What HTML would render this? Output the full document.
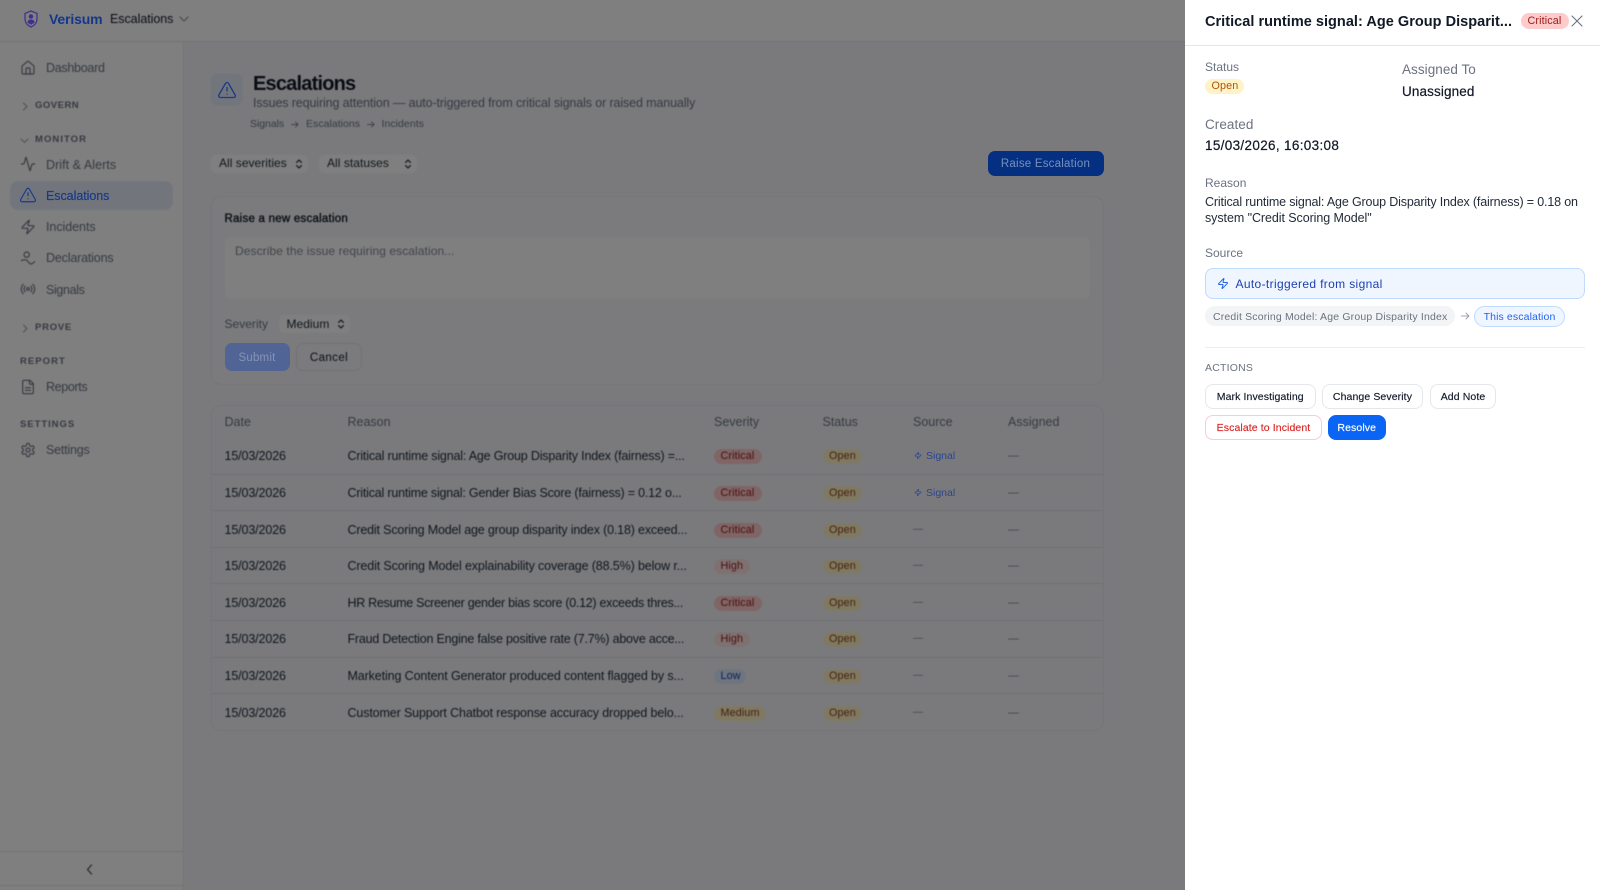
<!DOCTYPE html>
<html lang="en">
<head>
<meta charset="utf-8">
<title>Escalations</title>
<style>
*{box-sizing:border-box;margin:0;padding:0}
html,body{width:1600px;height:890px;overflow:hidden;background:#f4f5fa;font-family:"Liberation Sans",sans-serif}
.t{position:absolute;white-space:nowrap;line-height:16px;height:16px}
.b{position:absolute}
svg.i{position:absolute;fill:none;stroke:currentColor;stroke-width:2;stroke-linecap:round;stroke-linejoin:round}
#app{position:absolute;left:0;top:0;width:1600px;height:890px}
.nav{font-size:12.5px;color:#6b7280;left:46px;letter-spacing:-.05px}
.sec{font-size:9.5px;font-weight:bold;color:#6b7280}
.ni{color:#6b7280;width:16px;height:16px;left:20px;stroke-width:1.7!important}
.chev{color:#9ca3af;stroke-width:1.1!important}
.th{font-size:12.5px;color:#6b7280;top:414px}
.d{font-size:12.5px;color:#1f2937;left:224.5px;letter-spacing:-.12px;margin-top:.5px}
.r{font-size:12.5px;color:#1f2937;left:347.5px;margin-top:.5px}
.pill{position:absolute;height:15px;line-height:15px;border-radius:8px;font-size:10.8px;padding:0 6.5px;white-space:nowrap;letter-spacing:.12px;margin-top:.5px}
.cr{left:714px;width:47.5px;background:#fecaca;color:#991b1b}
.hi{left:714px;width:36px;background:#fee2e2;color:#991b1b}
.lo{left:714px;width:32px;background:#dbeafe;color:#1e40af}
.me{left:714px;width:51.5px;background:#fef3c7;color:#92400e}
.op{left:822.5px;width:39px;background:#fef3c7;color:#92400e}
.dash{font-size:10px;color:#7b8290;margin-top:.5px}
.sep{position:absolute;left:211px;width:892px;height:1px;background:#dde1e8}
.sig{font-size:10.5px;color:#2a4590;left:926px;margin-top:.5px}
.lab{color:#6b7280}
.sel{position:absolute;background:#fff;border-radius:5px}
.act{position:absolute;height:24.5px;border:1px solid #e5e7eb;border-radius:8px;background:#fff;font-size:10.5px;line-height:24.5px;text-align:center;color:#111827;letter-spacing:.1px;white-space:nowrap;-webkit-text-stroke:.15px currentColor}
</style>
</head>
<body>
<svg width="0" height="0" style="position:absolute">
<symbol id="zap" viewBox="0 0 24 24"><path d="M4 14a1 1 0 0 1-.78-1.63l9.9-10.2a.5.5 0 0 1 .86.46l-1.92 6.02A1 1 0 0 0 13 10h7a1 1 0 0 1 .78 1.63l-9.9 10.2a.5.5 0 0 1-.86-.46l1.92-6.02A1 1 0 0 0 11 14z"/></symbol>
<symbol id="warn" viewBox="0 0 24 24"><path d="m21.73 18-8-14a2 2 0 0 0-3.48 0l-8 14A2 2 0 0 0 4 21h16a2 2 0 0 0 1.73-3"/><path d="M12 9v4"/><path d="M12 17h.01"/></symbol>
<symbol id="ud" viewBox="0 0 10 14"><path d="M2 5 5 2l3 3M2 9l3 3 3-3"/></symbol>
</svg>

<div id="app">
  <!-- top bar -->
  <div class="b" style="left:0;top:0;width:1600px;height:42px;background:#fff;border-bottom:1px solid #e5e7eb"></div>
  <div class="t" style="left:110px;top:11px;font-size:12.5px;color:#111827;letter-spacing:-.05px">Escalations</div>
  <svg class="i chev" style="left:179px;top:14px;stroke-width:1.3!important" width="10" height="10" viewBox="0 0 10 10"><path d="M1 3l4 4 4-4"/></svg>

  <!-- sidebar -->
  <div class="b" style="left:0;top:42px;width:184px;height:848px;background:#fff;border-right:1px solid #e5e7eb"></div>
  <svg class="i ni" style="top:60px" viewBox="0 0 24 24"><path d="M15 21v-8a1 1 0 0 0-1-1h-4a1 1 0 0 0-1 1v8"/><path d="M3 10a2 2 0 0 1 .709-1.528l7-5.999a2 2 0 0 1 2.582 0l7 5.999A2 2 0 0 1 21 10v9a2 2 0 0 1-2 2H5a2 2 0 0 1-2-2z"/></svg>
  <div class="t nav" style="top:59.5px;letter-spacing:-.28px">Dashboard</div>
  <svg class="i chev" style="left:20.5px;top:102px" width="8" height="9" viewBox="0 0 8 9"><path d="M2.5 1l3.500 3.500L2.500 8"/></svg>
  <div class="t sec" style="left:35px;top:98px;letter-spacing:.5px">GOVERN</div>
  <svg class="i chev" style="left:20px;top:137px" width="9" height="8" viewBox="0 0 9 8"><path d="M1 2l3.500 3.500L8 2"/></svg>
  <div class="t sec" style="left:35px;top:132px;letter-spacing:1.05px">MONITOR</div>
  <svg class="i ni" style="top:156px" viewBox="0 0 24 24"><path d="M22 12h-2.480a2 2 0 0 0-1.930 1.460l-2.350 8.360a.25.25 0 0 1-.48 0L9.240 2.180a.25.25 0 0 0-.48 0l-2.350 8.360A2 2 0 0 1 4.490 12H2"/></svg>
  <div class="t nav" style="top:156.5px;letter-spacing:.05px">Drift &amp; Alerts</div>
  <div class="b" style="left:10px;top:181px;width:163px;height:29px;border-radius:8px;background:#e5edf9"></div>
  <svg class="i" style="left:20px;top:219px;color:#6b7280;width:16px;height:16px;stroke-width:1.7"><use href="#zap"/></svg>
  <div class="t nav" style="top:219px">Incidents</div>
  <svg class="i ni" style="top:250px" viewBox="0 0 24 24"><circle cx="10" cy="7" r="4"/><path d="M2 16c2-1.500 7-2 9 0s3 5 5.500 5 3.500-2 5.500-3.500"/></svg>
  <div class="t nav" style="top:250px;letter-spacing:-.17px">Declarations</div>
  <svg class="i ni" style="top:281px" viewBox="0 0 24 24"><path d="M4.900 19.100C1 15.200 1 8.800 4.900 4.900"/><path d="M7.800 16.200c-2.300-2.300-2.300-6.100 0-8.500"/><circle cx="12" cy="12" r="2"/><path d="M16.200 7.800c2.300 2.300 2.300 6.100 0 8.500"/><path d="M19.100 4.900C23 8.800 23 15.100 19.100 19"/></svg>
  <div class="t nav" style="top:281.5px;letter-spacing:-.35px">Signals</div>
  <svg class="i chev" style="left:20.5px;top:324px" width="8" height="9" viewBox="0 0 8 9"><path d="M2.500 1l3.500 3.500L2.500 8"/></svg>
  <div class="t sec" style="left:35px;top:320px;letter-spacing:.75px">PROVE</div>
  <div class="t sec" style="left:20px;top:354px;letter-spacing:1.05px">REPORT</div>
  <svg class="i ni" style="top:379px" viewBox="0 0 24 24"><path d="M15 2H6a2 2 0 0 0-2 2v16a2 2 0 0 0 2 2h12a2 2 0 0 0 2-2V7Z"/><path d="M14 2v4a2 2 0 0 0 2 2h4"/><path d="M16 13H8"/><path d="M16 17H8"/></svg>
  <div class="t nav" style="top:378.5px;letter-spacing:-.35px">Reports</div>
  <div class="t sec" style="left:20px;top:417px;letter-spacing:.95px">SETTINGS</div>
  <svg class="i ni" style="top:442px" viewBox="0 0 24 24"><path d="M12.220 2h-.44a2 2 0 0 0-2 2v.18a2 2 0 0 1-1 1.730l-.43.25a2 2 0 0 1-2 0l-.15-.08a2 2 0 0 0-2.730.73l-.22.38a2 2 0 0 0 .73 2.730l.15.1a2 2 0 0 1 1 1.720v.51a2 2 0 0 1-1 1.740l-.15.09a2 2 0 0 0-.73 2.730l.22.38a2 2 0 0 0 2.730.73l.15-.08a2 2 0 0 1 2 0l.43.25a2 2 0 0 1 1 1.730V20a2 2 0 0 0 2 2h.44a2 2 0 0 0 2-2v-.18a2 2 0 0 1 1-1.730l.43-.25a2 2 0 0 1 2 0l.15.08a2 2 0 0 0 2.730-.73l.22-.39a2 2 0 0 0-.73-2.730l-.15-.08a2 2 0 0 1-1-1.740v-.5a2 2 0 0 1 1-1.740l.15-.09a2 2 0 0 0 .73-2.730l-.22-.38a2 2 0 0 0-2.730-.73l-.15.08a2 2 0 0 1-2 0l-.43-.25a2 2 0 0 1-1-1.730V4a2 2 0 0 0-2-2z"/><circle cx="12" cy="12" r="3"/></svg>
  <div class="t nav" style="top:442px;letter-spacing:-.2px">Settings</div>
  <div class="b" style="left:0;top:851px;width:183px;height:1px;background:#e5e7eb"></div>
  <div class="b" style="left:0;top:885px;width:183px;height:1px;background:#e5e7eb"></div>
  <svg class="i" style="left:86px;top:864px;color:#4b5563;stroke-width:1.3" width="7" height="11" viewBox="0 0 7 11"><path d="M5.500 1 1.500 5.500l4 4.500"/></svg>

  <!-- header -->
  <div class="b" style="left:210px;top:73px;width:33px;height:33px;border-radius:8px;background:#e5edf9"></div>
  <div class="t" style="left:253px;top:75.5px;font-size:20px;font-weight:bold;color:#111827;letter-spacing:-.8px">Escalations</div>
  <div class="t" style="left:253px;top:95px;font-size:12.5px;color:#6b7280;letter-spacing:-.12px">Issues requiring attention — auto-triggered from critical signals or raised manually</div>
  <div class="t" style="left:250px;top:116px;font-size:10.5px;color:#6b7280;letter-spacing:-.05px">Signals</div>
  <svg class="i" style="left:290.500px;top:120.500px;color:#6b7280;stroke-width:1" width="8" height="7" viewBox="0 0 9 8"><path d="M.5 4h7.500M5 1l3 3-3 3"/></svg>
  <div class="t" style="left:306px;top:116px;font-size:10.5px;color:#6b7280;letter-spacing:.03px">Escalations</div>
  <svg class="i" style="left:366.500px;top:120.500px;color:#6b7280;stroke-width:1" width="8" height="7" viewBox="0 0 9 8"><path d="M.5 4h7.500M5 1l3 3-3 3"/></svg>
  <div class="t" style="left:381.500px;top:116px;font-size:10.5px;color:#6b7280;letter-spacing:.05px">Incidents</div>

  <!-- filters -->
  <div class="sel" style="left:211px;top:155px;width:97px;height:17.5px"></div>
  <div class="t" style="left:219px;top:155px;font-size:12px;color:#1f2937;letter-spacing:.03px">All severities</div>
  <svg class="i" style="left:295px;top:158px;width:8px;height:12px;color:#1f2937;stroke-width:1.500"><use href="#ud"/></svg>
  <div class="sel" style="left:319px;top:155px;width:98px;height:17.5px"></div>
  <div class="t" style="left:327px;top:155px;font-size:12px;color:#1f2937;letter-spacing:.05px">All statuses</div>
  <svg class="i" style="left:404px;top:158px;width:8px;height:12px;color:#1f2937;stroke-width:1.500"><use href="#ud"/></svg>

  <!-- card -->
  <div class="b" style="left:210.5px;top:196px;width:893px;height:189px;border:1px solid #e6e8ee;border-radius:10px;background:#f6f7fa"></div>
  <div class="t" style="left:224.5px;top:211px;font-size:11.5px;color:#111827;letter-spacing:.24px;-webkit-text-stroke:.35px #111827">Raise a new escalation</div>
  <div class="b" style="left:225px;top:237px;width:865px;height:62px;border-radius:7px;background:#fff"></div>
  <div class="t" style="left:235px;top:242.500px;font-size:12px;color:#6b7280;opacity:.85;letter-spacing:.08px">Describe the issue requiring escalation...</div>
  <div class="t" style="left:224.5px;top:316px;font-size:12px;color:#6b7280;letter-spacing:.02px">Severity</div>
  <div class="sel" style="left:279px;top:315px;width:71px;height:17.5px"></div>
  <div class="t" style="left:286.5px;top:315.5px;font-size:12px;color:#1f2937;letter-spacing:.03px">Medium</div>
  <svg class="i" style="left:337px;top:318px;width:8px;height:12px;color:#1f2937;stroke-width:1.500"><use href="#ud"/></svg>
  <div class="b" style="left:296px;top:343px;width:66px;height:28px;border-radius:7px;border:1px solid #dfe2e8"></div>
  <div class="t" style="left:296px;width:66px;text-align:center;top:350px;font-size:11.5px;color:#111827;letter-spacing:.4px">Cancel</div>

  <!-- table -->
  <div class="b" style="left:210.5px;top:405px;width:893px;height:326px;border:1px solid #e6e8ee;border-radius:10px"></div>
  <div class="t th" style="left:224.5px">Date</div>
  <div class="t th" style="left:347.5px">Reason</div>
  <div class="t th" style="left:714px">Severity</div>
  <div class="t th" style="left:822.5px">Status</div>
  <div class="t th" style="left:913px">Source</div>
  <div class="t th" style="left:1008px">Assigned</div>

  <div class="sep" style="top:474px"></div>
  <div class="sep" style="top:510px"></div>
  <div class="sep" style="top:547px"></div>
  <div class="sep" style="top:583px"></div>
  <div class="sep" style="top:620px"></div>
  <div class="sep" style="top:657px"></div>
  <div class="sep" style="top:693px"></div>

  <div class="t d" style="top:447.5px">15/03/2026</div>
  <div class="t r" style="top:447.5px;letter-spacing:-.18px">Critical runtime signal: Age Group Disparity Index (fairness) =...</div>
  <div class="pill cr" style="top:448.5px">Critical</div><div class="pill op" style="top:448.5px">Open</div>
  <div class="t dash" style="left:1008px;top:447.5px;font-size:11px">—</div>

  <div class="t d" style="top:484.5px">15/03/2026</div>
  <div class="t r" style="top:484.5px;letter-spacing:-.2px">Critical runtime signal: Gender Bias Score (fairness) = 0.12 o...</div>
  <div class="pill cr" style="top:485.5px">Critical</div><div class="pill op" style="top:485.5px">Open</div>
  <div class="t dash" style="left:1008px;top:484.5px;font-size:11px">—</div>

  <div class="t d" style="top:521px">15/03/2026</div>
  <div class="t r" style="top:521px;letter-spacing:-.165px">Credit Scoring Model age group disparity index (0.18) exceed...</div>
  <div class="pill cr" style="top:522px">Critical</div><div class="pill op" style="top:522px">Open</div>
  <div class="t dash" style="left:913px;top:521px">—</div><div class="t dash" style="left:1008px;top:521px;font-size:11px">—</div>

  <div class="t d" style="top:557.5px">15/03/2026</div>
  <div class="t r" style="top:557.5px;letter-spacing:-.13px">Credit Scoring Model explainability coverage (88.5%) below r...</div>
  <div class="pill hi" style="top:558.5px">High</div><div class="pill op" style="top:558.5px">Open</div>
  <div class="t dash" style="left:913px;top:557.5px">—</div><div class="t dash" style="left:1008px;top:557.5px;font-size:11px">—</div>

  <div class="t d" style="top:594px">15/03/2026</div>
  <div class="t r" style="top:594px;letter-spacing:-.29px">HR Resume Screener gender bias score (0.12) exceeds thres...</div>
  <div class="pill cr" style="top:595px">Critical</div><div class="pill op" style="top:595px">Open</div>
  <div class="t dash" style="left:913px;top:594px">—</div><div class="t dash" style="left:1008px;top:594px;font-size:11px">—</div>

  <div class="t d" style="top:630.5px">15/03/2026</div>
  <div class="t r" style="top:630.5px;letter-spacing:-.215px">Fraud Detection Engine false positive rate (7.7%) above acce...</div>
  <div class="pill hi" style="top:631.5px">High</div><div class="pill op" style="top:631.5px">Open</div>
  <div class="t dash" style="left:913px;top:630.5px">—</div><div class="t dash" style="left:1008px;top:630.5px;font-size:11px">—</div>

  <div class="t d" style="top:667px">15/03/2026</div>
  <div class="t r" style="top:667px;letter-spacing:-.12px">Marketing Content Generator produced content flagged by s...</div>
  <div class="pill lo" style="top:668px">Low</div><div class="pill op" style="top:668px">Open</div>
  <div class="t dash" style="left:913px;top:667px">—</div><div class="t dash" style="left:1008px;top:667px;font-size:11px">—</div>

  <div class="t d" style="top:704px">15/03/2026</div>
  <div class="t r" style="top:704px;letter-spacing:-.135px">Customer Support Chatbot response accuracy dropped belo...</div>
  <div class="pill me" style="top:705px">Medium</div><div class="pill op" style="top:705px">Open</div>
  <div class="t dash" style="left:913px;top:704px">—</div><div class="t dash" style="left:1008px;top:704px;font-size:11px">—</div>

  <!-- overlay -->
  <div class="b" style="left:0;top:0;width:1600px;height:890px;background:rgba(0,0,0,.5);backdrop-filter:blur(.5px)"></div>

  <!-- dimmed accent items, colours as seen through the overlay -->
  <div class="b" style="left:0;top:0;width:1184px;height:890px;filter:blur(.3px)">
    <svg class="b" style="left:24px;top:10px" width="14" height="18" viewBox="0 0 14 18"><path d="M7 1 13 3.400V9c0 3.800-2.600 6.500-6 8C3.600 15.500 1 12.800 1 9V3.400z" fill="none" stroke="#45338f" stroke-width="1.300"/><circle cx="7" cy="6.500" r="2.200" fill="#38328c"/><path d="M3.300 12.500c.6-2.300 2-3 3.700-3s3.100.7 3.700 3L7 14.800z" fill="#38328c"/></svg>
    <div class="t" style="left:49px;top:10.500px;font-size:14px;font-weight:bold;color:#14368c;letter-spacing:-.15px">Verisum</div>
    <svg class="i" style="left:19px;top:186px;color:#1a3a8a;width:18px;height:18px;stroke-width:1.6"><use href="#warn"/></svg>
    <div class="t nav" style="top:187.5px;color:#1a3a8a;-webkit-text-stroke:.2px #1a3a8a">Escalations</div>
    <svg class="i" style="left:216.500px;top:80px;color:#1a3a8a;width:20px;height:20px;stroke-width:1.6"><use href="#warn"/></svg>
    <div class="b" style="left:987.5px;top:150.5px;width:116px;height:25.5px;border-radius:7px;background:#053082"></div>
    <div class="t" style="left:987.5px;width:116px;text-align:center;top:155.5px;font-size:11.5px;color:rgba(255,255,255,.45);letter-spacing:.22px">Raise Escalation</div>
    <div class="b" style="left:224.5px;top:343px;width:65px;height:28px;border-radius:7px;background:#506496"></div>
    <div class="t" style="left:224.5px;width:65px;text-align:center;top:350px;font-size:11.5px;color:rgba(255,255,255,.3);letter-spacing:.2px">Submit</div>
    <svg class="i" style="left:914px;top:451px;width:8px;height:9px;color:#2a4590"><use href="#zap"/></svg>
    <div class="t sig" style="top:447.5px">Signal</div>
    <svg class="i" style="left:914px;top:488px;width:8px;height:9px;color:#2a4590"><use href="#zap"/></svg>
    <div class="t sig" style="top:484.5px">Signal</div>
  </div>

  <!-- panel -->
  <div class="b" style="left:1184.5px;top:0;width:415.5px;height:890px;background:#fff"></div>
  <div class="b" style="left:1185px;top:45px;width:415px;height:1px;background:#e5e7eb"></div>
  <div class="t" style="left:1205px;top:14px;font-size:14.5px;font-weight:bold;color:#111827;letter-spacing:.03px">Critical runtime signal: Age Group Disparit...</div>
  <div class="pill" style="left:1521px;top:12.5px;height:16px;line-height:16px;width:47.5px;background:#fecaca;color:#991b1b;border-radius:8px">Critical</div>
  <svg class="i" style="left:1571px;top:15px;color:#6b7280;stroke-width:1.1" width="12" height="12" viewBox="0 0 12 12"><path d="M1 1l10 10M11 1 1 11"/></svg>

  <div class="t lab" style="left:1205px;top:59px;font-size:12px">Status</div>
  <div class="pill" style="left:1205px;top:78.5px;width:39px;background:#fef3c7;color:#b45309">Open</div>
  <div class="t lab" style="left:1402px;top:62px;font-size:13.5px;letter-spacing:.05px">Assigned To</div>
  <div class="t" style="left:1402px;top:84px;font-size:13.5px;color:#111827;letter-spacing:.12px;-webkit-text-stroke:.2px #111827">Unassigned</div>
  <div class="t lab" style="left:1205px;top:116.5px;font-size:13.5px;letter-spacing:.05px">Created</div>
  <div class="t" style="left:1205px;top:137.5px;font-size:13.5px;color:#111827;letter-spacing:.33px;-webkit-text-stroke:.2px #111827">15/03/2026, 16:03:08</div>
  <div class="t lab" style="left:1205px;top:175px;font-size:12px">Reason</div>
  <div class="t" style="left:1205px;top:194px;font-size:12.5px;color:#1f2937;letter-spacing:-.155px">Critical runtime signal: Age Group Disparity Index (fairness) = 0.18 on</div>
  <div class="t" style="left:1205px;top:209.5px;font-size:12.5px;color:#1f2937;letter-spacing:-.07px">system "Credit Scoring Model"</div>
  <div class="t lab" style="left:1205px;top:245px;font-size:12px">Source</div>
  <div class="b" style="left:1205px;top:267.5px;width:380px;height:31px;border:1px solid #bfdbfe;border-radius:8px;background:#eff6ff"></div>
  <svg class="i" style="left:1217px;top:277px;width:12px;height:13px;color:#2563eb"><use href="#zap"/></svg>
  <div class="t" style="left:1235.5px;top:275.5px;font-size:12px;color:#1e40af;letter-spacing:.35px">Auto-triggered from signal</div>
  <div class="b" style="left:1205px;top:306px;width:250px;height:20px;border-radius:10px;background:#f3f4f6"></div>
  <div class="t" style="left:1213px;top:308.5px;font-size:10.5px;color:#6b7280;letter-spacing:.17px">Credit Scoring Model: Age Group Disparity Index</div>
  <svg class="i" style="left:1461px;top:312px;color:#9ca3af;stroke-width:1" width="9" height="8" viewBox="0 0 9 8"><path d="M.5 4h7.500M5 1l3 3-3 3"/></svg>
  <div class="b" style="left:1474px;top:305.5px;width:91px;height:21px;border-radius:11px;border:1px solid #bfdbfe;background:#eff6ff"></div>
  <div class="t" style="left:1474px;width:91px;text-align:center;top:308.5px;font-size:10.5px;color:#2563eb;letter-spacing:.12px">This escalation</div>
  <div class="b" style="left:1205px;top:346.5px;width:380px;height:1px;background:#eceef1"></div>
  <div class="t lab" style="left:1205px;top:360px;font-size:10.5px;letter-spacing:.2px">ACTIONS</div>
  <div class="act" style="left:1205px;top:384px;width:110.5px">Mark Investigating</div>
  <div class="act" style="left:1322px;top:384px;width:101px">Change Severity</div>
  <div class="act" style="left:1430px;top:384px;width:66px">Add Note</div>
  <div class="act" style="left:1205px;top:415px;width:117px;border-color:#fecaca;color:#dc2626">Escalate to Incident</div>
  <div class="act" style="left:1328px;top:415px;width:57.5px;border-color:#0a65f5;background:#0a65f5;color:#fff">Resolve</div>
</div>
</body>
</html>
